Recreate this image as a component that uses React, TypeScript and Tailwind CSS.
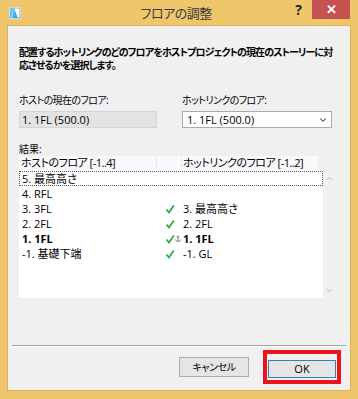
import { ChevronDown, ChevronUp } from "lucide-react";

type Row = {
  host: string;
  link?: string;
  bold?: boolean;
  anchor?: boolean;
};

const rows: Row[] = [
  { host: "5. 最高高さ" },
  { host: "4. RFL" },
  { host: "3. 3FL", link: "3. 最高高さ" },
  { host: "2. 2FL", link: "2. 2FL" },
  { host: "1. 1FL", link: "1. 1FL", bold: true, anchor: true },
  { host: "-1. 基礎下端", link: "-1. GL" },
];

function AppIcon() {
  return (
    <svg width="12" height="12" viewBox="0 0 12 12">
      <defs>
        <linearGradient id="ic" x1="0" y1="0" x2="1" y2="1">
          <stop offset="0" stopColor="#7fd3f7" />
          <stop offset="1" stopColor="#1593d6" />
        </linearGradient>
      </defs>
      <rect x="0.5" y="0.5" width="11" height="11" fill="url(#ic)" stroke="#d9d9d9" />
      <path d="M5.5 1.5 L10.5 1.5 L10.5 10.5 L8.5 10.5 Z" fill="#ffffff" />
      <path d="M4.5 2 L2 10.5 L3.5 10.5 Z" fill="#ffffff" opacity="0.7" />
    </svg>
  );
}

function Check() {
  return (
    <svg width="10" height="10" viewBox="0 0 10 10">
      <path d="M1.5 5.5 L4 8.5 L8.8 1.5" fill="none" stroke="#2eae48" strokeWidth="1.8" />
    </svg>
  );
}

function Anchor() {
  return (
    <svg width="6" height="7" viewBox="0 0 6 7">
      <path d="M3 0.5 V6.3 M1.5 2 H4.5 M0.5 4.5 Q1 6.5 3 6.5 Q5 6.5 5.5 4.5" fill="none" stroke="#7a7a7a" strokeWidth="0.9" />
    </svg>
  );
}

export default function App() {
  return (
    <div className="flex h-[399px] w-[358px] flex-col bg-[#efc66b] font-['Open_Sans','Noto_Sans_CJK_JP',sans-serif] [font-feature-settings:'palt'] text-black">
      {/* title bar */}
      <div className="flex h-[25px] items-start">
        <div className="ml-[9px] mt-[7px]">
          <AppIcon />
        </div>
        <div className="flex-1 pl-[36px] pt-[4px] text-center font-['Noto_Sans_CJK_JP',sans-serif] text-[13px] leading-[18px] tracking-[-0.5px] text-[#3b3b3b]">
          フロアの調整
        </div>
        <div className="mr-[10px] pt-[1px] text-[14px] font-bold leading-[18px] text-[#222]">?</div>
        <div className="mr-[8px] flex h-[19px] w-[38px] items-center justify-center bg-[#c75050] text-[13px] font-bold leading-none text-white">
          ✕
        </div>
      </div>

      {/* client */}
      <div className="mx-[7px] mb-[8px] flex flex-1 flex-col border border-[#dcb35c] bg-[#f0f0f0]">
        <div className="flex flex-1 flex-col px-[11px]">
          <p className="mt-[20px] whitespace-nowrap text-[10px] font-bold leading-[13px] tracking-[-0.9px]">
            配置するホットリンクのどのフロアをホストプロジェクトの現在のストーリーに対
            <br />
            応させるかを選択します。
          </p>

          <div className="mt-[22px] flex text-[10px] leading-[12px] tracking-[-0.6px]">
            <div className="w-[163px]">ホストの現在のフロア:</div>
            <div>ホットリンクのフロア:</div>
          </div>

          <div className="mt-[5px] flex">
            <div className="flex h-[17px] w-[138px] items-center border border-[#d4d4d4] bg-[#e3e3e3] pl-[2px] text-[11px] leading-[14px]">
              1. 1FL (500.0)
            </div>
            <div className="ml-[25px] flex h-[17px] w-[150px] items-center justify-between border border-[#acacac] bg-white pl-[4px] pr-[3px] text-[11px] leading-[14px]">
              <span>1. 1FL (500.0)</span>
              <ChevronDown size={10} strokeWidth={2.5} className="text-[#444]" />
            </div>
          </div>

          <div className="mt-[15px] text-[10px] leading-[12px]">結果:</div>

          {/* list view */}
          <div className="mt-[1px] flex h-[142px] w-[317px]">
            <div className="flex w-[304px] flex-col bg-white">
              <div className="flex h-[14px] bg-[#f0f0f0] text-[11px] leading-[14px]">
                <div className="w-[138px] overflow-hidden whitespace-nowrap border-r border-[#e6ebf2] bg-[#f7f9fc] pl-[2px] tracking-[-0.5px]">ホストのフロア [-1..4]</div>
                <div className="w-[25px] border-r border-[#e6ebf2] bg-[#f7f9fc]" />
                <div className="w-[136px] overflow-hidden whitespace-nowrap bg-[#f7f9fc] pl-[1px] tracking-[-0.5px]">ホットリンクのフロア [-1..2]</div>
              </div>
              <div className="flex flex-col pt-[1px] text-[11px] leading-[13px]">
                {rows.map((r, i) => (
                  <div
                    key={i}
                    className={`flex h-[15px] items-center ${i === 0 ? "border border-dotted border-[#555]" : "border border-transparent"} ${r.bold ? "font-bold" : ""}`}
                  >
                    <div className="w-[137px] pl-[2px]">{r.host}</div>
                    <div className="flex w-[25px] items-center pl-[8px]">
                      {r.link && <Check />}
                      {r.anchor && <Anchor />}
                    </div>
                    <div className="pl-[1px]">{r.link}</div>
                  </div>
                ))}
              </div>
            </div>
            <div className="flex w-[13px] flex-col items-center justify-between pb-[3px] pt-[18px] text-[#b5b5b5]">
              <ChevronUp size={9} strokeWidth={2.5} />
              <ChevronDown size={9} strokeWidth={2.5} />
            </div>
          </div>
        </div>

        {/* footer */}
        <div className="mx-[4px] border-t border-b border-t-[#a0a0a0] border-b-white" />
        <div className="flex items-center justify-end pb-[6px] pl-[3px] pr-[9px] pt-[3px]">
          <button className="mr-[14px] h-[20px] w-[70px] border border-[#acacac] bg-[#e5e5e5] text-[10px] leading-none tracking-[-0.4px]">
            キャンセル
          </button>
          <div className="border-[4px] border-[#e8141e] p-[1px]">
            <button className="h-[18px] w-[68px] border border-[#3c7fb1] bg-[#e5e5e5] text-[11px] leading-none">
              OK
            </button>
          </div>
        </div>
      </div>
    </div>
  );
}
